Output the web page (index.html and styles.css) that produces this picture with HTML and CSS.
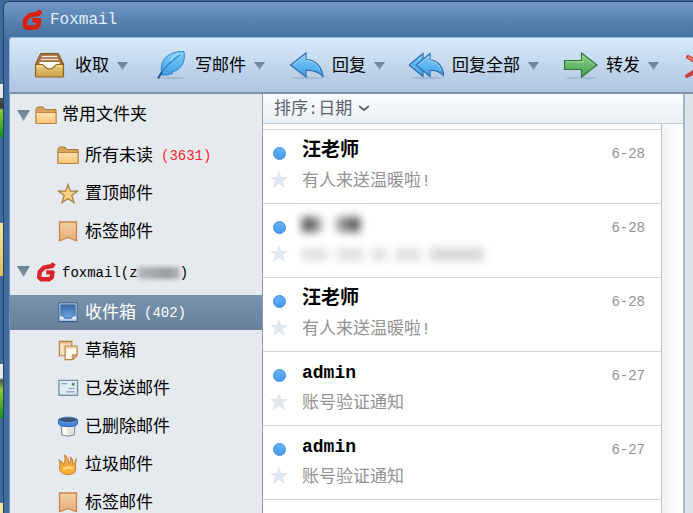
FILE: index.html
```html
<!DOCTYPE html>
<html lang="zh-CN">
<head>
<meta charset="utf-8">
<meta name="viewport" content="width=device-width, initial-scale=1">
<title>Foxmail</title>
<link rel="stylesheet" href="styles.css">
</head>
<body>
<svg class="defs" aria-hidden="true">
  <defs>
    <linearGradient id="gold" x1="0" y1="0" x2="0" y2="1"><stop offset="0" stop-color="#ffe3b3"/><stop offset="1" stop-color="#f9c377"/></linearGradient>
    <linearGradient id="tray" x1="0" y1="0" x2="0" y2="1"><stop offset="0" stop-color="#ecd083"/><stop offset="1" stop-color="#c99f48"/></linearGradient>
    <linearGradient id="sky" x1="0" y1="0" x2="0" y2="1"><stop offset="0" stop-color="#84d0fa"/><stop offset="1" stop-color="#3c9fe6"/></linearGradient>
    <linearGradient id="leaf" x1="0" y1="0" x2="0" y2="1"><stop offset="0" stop-color="#8ed18b"/><stop offset="1" stop-color="#44a04c"/></linearGradient>
    <linearGradient id="tag" x1="0" y1="0" x2="0" y2="1"><stop offset="0" stop-color="#f0d0a0"/><stop offset="1" stop-color="#eaae7c"/></linearGradient>
    <linearGradient id="fire" x1="0" y1="0" x2="0" y2="1"><stop offset="0" stop-color="#e9a052"/><stop offset="1" stop-color="#ffb52c"/></linearGradient>
    <linearGradient id="navy" x1="0" y1="0" x2="0" y2="1"><stop offset="0" stop-color="#3767a8"/><stop offset="1" stop-color="#72a8e0"/></linearGradient>
    <linearGradient id="caret" x1="0" y1="0" x2="0" y2="1"><stop offset="0" stop-color="#6c8296"/><stop offset="1" stop-color="#8799aa"/></linearGradient>
  </defs>
  <symbol id="fox" viewBox="0 0 60 64"><path d="M55 4 50 13 38 15 23 18 10 31 8 49 14 55H41L49 48 51 33H31" fill="none" stroke="currentColor" stroke-width="14" stroke-linejoin="round"/></symbol>
  <symbol id="folder" viewBox="0 0 22 19"><path d="M1 17.500V3L2.500 1H8l2 2.500h11V17.500Z" fill="#d9a45c" stroke="#b37a35"/><path d="M1 6.500h20v11H1Z" fill="url(#gold)" stroke="#bb8440"/></symbol>
  <symbol id="bookmark" viewBox="0 0 22 21"><path d="M2.500 1h17v18.500L17 19l-6-2.500L5 19l-2.500.5Z" fill="url(#tag)" stroke="#c8854f" stroke-width="1.300"/></symbol>
  <symbol id="small-star" viewBox="0 0 18 17"><path d="M9 0l2.500 6H18l-5 4 2 7-6-4-6 4 2-7-5-4h6.500Z" fill="#dfe7ef"/></symbol>
  <symbol id="down" viewBox="0 0 12 8" preserveAspectRatio="none"><path d="M0 0h12L6 8Z" fill="url(#caret)"/></symbol>
</svg>

<div class="window">
  <header class="titlebar">
    <svg class="brand brand-title" aria-hidden="true"><use href="#fox"/></svg>
    <h1>Foxmail</h1>
  </header>

  <div class="toolbar" role="toolbar">
    <button type="button">
      <svg class="tool-icon" viewBox="0 0 35 34" aria-hidden="true"><path d="M8.500 4.500h18l5 10.500v2h-28v-2Z" fill="#a77438" stroke="#88571f"/><path d="M9.500 6.500h16v2h-16Z" fill="#f8ece0" stroke="#9a6c48" stroke-width=".6"/><path d="M8.500 9.500h18v2h-18Z" fill="#f5ded1" stroke="#9a6c48" stroke-width=".6"/><path d="M7.500 13h20v8h-20Z" fill="#fffdf8"/><path d="M3.500 15.500H10c3 0 2 4.500 7.500 4.500s4.500-4.500 7.500-4.500h6.500v11.500q0 1-1 1h-26q-1 0-1-1Z" fill="url(#tray)" stroke="#91641f" stroke-width="1.200"/><path d="M5 17h5M26 17h4" stroke="#fbe7a8"/></svg>
      <span>收取</span><svg class="caret" aria-hidden="true"><use href="#down"/></svg>
    </button>
    <button type="button">
      <svg class="tool-icon" viewBox="0 0 35 34" aria-hidden="true"><ellipse cx="20" cy="29" rx="13" ry="1.300" fill="#91a9c4" opacity=".5"/><path d="M10 26C6 10 18 2 32 2.500 34 14 28 22 19 23l2 1q-5 3-11 2Z" fill="url(#sky)" stroke="#2889cf"/><path d="M6 29.500Q10 21 18 14T28 6" fill="none" stroke="#2f7fc0" stroke-width="1.200"/><path d="M6 29.500 10 23" stroke="#23588c" stroke-width="2"/><path d="M19 12q1-5 8-7" fill="none" stroke="#b9e7ff" stroke-width="1.500" opacity=".7"/></svg>
      <span>写邮件</span><svg class="caret" aria-hidden="true"><use href="#down"/></svg>
    </button>
    <button type="button">
      <svg class="tool-icon" viewBox="0 0 35 34" aria-hidden="true"><ellipse cx="18" cy="29" rx="16" ry="1.300" fill="#91a9c4" opacity=".5"/><path d="M1.500 16 17 4v6.500c10 0 16 8 17 17-5-5-10-6.500-17-6v6.500Z" fill="url(#sky)" stroke="#376fac" stroke-width="1.200"/><path d="M4 16 16 6.500v5c8 0 12 4 15 10" fill="none" stroke="#a9e0fd" stroke-width=".7"/></svg>
      <span>回复</span><svg class="caret" aria-hidden="true"><use href="#down"/></svg>
    </button>
    <button type="button">
      <svg class="tool-icon" viewBox="0 0 35 34" aria-hidden="true"><ellipse cx="18" cy="29" rx="15" ry="1.300" fill="#91a9c4" opacity=".5"/><path d="M0 16 14 4.500v23Z" fill="url(#sky)" stroke="#2f6eac" stroke-width="1.200"/><path d="M7 16 21 4.500v6.500c8 0 13 7 14 16-4-4-9-6-14-5.500v6Z" fill="url(#sky)" stroke="#2f6eac" stroke-width="1.200"/><path d="M9.500 16 20 7v5c7 0 10 4 12 9" fill="none" stroke="#a9e0fd" stroke-width=".7"/></svg>
      <span>回复全部</span><svg class="caret" aria-hidden="true"><use href="#down"/></svg>
    </button>
    <button type="button">
      <svg class="tool-icon" viewBox="0 0 35 34" aria-hidden="true"><ellipse cx="18" cy="29" rx="16" ry="1.300" fill="#91a9c4" opacity=".5"/><path d="M1.500 11.500h17v-7.500L34 16 18.500 28v-7.500h-17Z" fill="url(#leaf)" stroke="#327a3c" stroke-width="1.200"/><path d="M3 13h17V7l11 9" fill="none" stroke="#a5dca0" stroke-width=".8"/></svg>
      <span>转发</span><svg class="caret" aria-hidden="true"><use href="#down"/></svg>
    </button>
    <button type="button" aria-label="删除">
      <svg class="tool-icon" viewBox="0 0 35 34" aria-hidden="true"><path d="M5 8q10 5 20 19M4 27Q13 23 26 7" fill="none" stroke="#c83e38" stroke-width="4" stroke-linecap="round"/><path d="M5 8q10 5 20 19" fill="none" stroke="#f07a70" stroke-width="2"/></svg>
    </button>
  </div>

  <div class="workspace">
    <nav class="folders">
      <div class="group">
        <svg class="caret" aria-hidden="true"><use href="#down"/></svg>
        <svg class="folder-icon" aria-hidden="true"><use href="#folder"/></svg>
        <span>常用文件夹</span>
      </div>
      <ul>
        <li><a href="#unread"><svg class="folder-icon" aria-hidden="true"><use href="#folder"/></svg><span>所有未读</span><span class="count unread">(3631)</span></a></li>
        <li><a href="#pinned"><svg class="folder-icon" viewBox="0 0 22 22" aria-hidden="true"><path d="M11 1.500 13.500 8.500H21l-6 4.500 2.500 7.500L11 16.500 4.500 20.500 7 13 1 8.500h7.500Z" fill="#f6d181" stroke="#a7803f" stroke-width="1.300"/></svg><span>置顶邮件</span></a></li>
        <li><a href="#tagged"><svg class="folder-icon" aria-hidden="true"><use href="#bookmark"/></svg><span>标签邮件</span></a></li>
      </ul>
      <div class="group account">
        <svg class="caret" aria-hidden="true"><use href="#down"/></svg>
        <svg class="folder-icon brand" aria-hidden="true"><use href="#fox"/></svg>
        <span class="address">foxmail(z<i class="smudge"></i>)</span>
      </div>
      <ul>
        <li><a class="selected" href="#inbox" aria-current="page"><svg class="folder-icon" viewBox="0 0 22 22" aria-hidden="true"><path d="M1.500 1h19v19.500h-19Z" fill="#dce9f6" stroke="#254f84"/><path d="M3.500 3h15v11.500H16L14.500 17h-7L6 14.500H3.500Z" fill="url(#navy)" stroke="#33639d"/><path d="M3 19h16" stroke="#7fa5cf"/></svg><span>收件箱</span><span class="count">(402)</span></a></li>
        <li><a href="#drafts"><svg class="folder-icon" viewBox="0 0 22 22" aria-hidden="true"><path d="M2 1.500h13v15H2Z" fill="#f4dfbf" stroke="#b98445" stroke-width="1.300"/><path d="M2 3h13" stroke="#d6a467"/><path d="M8 6.500h12.500V16L16 20.500H8Z" fill="#fffaf0" stroke="#b98445" stroke-width="1.300"/><path d="M9 8h11" stroke="#efd4aa" stroke-width="2"/><path d="M20 15.500h-4.500v5Z" fill="#eab776" stroke="#b98445"/></svg><span>草稿箱</span></a></li>
        <li><a href="#sent"><svg class="folder-icon" viewBox="0 0 22 22" aria-hidden="true"><path d="M1.500 2.500h19.500v15.500h-19.500Z" fill="#e3ebf4" stroke="#7b91ad" stroke-width="1.500"/><path d="M4 6h6M12 11h6M9 14.500h9" stroke="#7f9fc7" stroke-width="1.300"/><path d="M15 5h3v3h-3Z" fill="#4b9671"/></svg><span>已发送邮件</span></a></li>
        <li><a href="#deleted"><svg class="folder-icon" viewBox="0 0 22 22" aria-hidden="true"><path d="M3.500 7h15l-1 13q-6.500 2-13 0Z" fill="#e6e5e1" stroke="#7487a0"/><path d="M6 10h4v10H6Z" fill="#fff"/><path d="M1 4v4q1 3 10 3t10-3V4Z" fill="#4387de" stroke="#2b5dae"/><ellipse cx="11" cy="4" rx="10" ry="3" fill="#3c5371" stroke="#689fe5"/></svg><span>已删除邮件</span></a></li>
        <li><a href="#junk"><svg class="folder-icon" viewBox="0 0 22 22" aria-hidden="true"><path d="M4 19C0 15 4 11 1.500 6q4 2 5 5Q9 7 7.500 1q4.500 3 4.500 9 3-2 1.500-7 4 3 2.500 8 2-1 4-6-2 5-1 9 1 8-9 7.500-4 0-6-2.500Z" fill="url(#fire)" stroke="#c2782d"/><path d="M6 16q5-3 10-1" fill="none" stroke="#ffdc82" stroke-width="2"/></svg><span>垃圾邮件</span></a></li>
        <li><a href="#account-tagged"><svg class="folder-icon" aria-hidden="true"><use href="#bookmark"/></svg><span>标签邮件</span></a></li>
      </ul>
    </nav>

    <main class="messages">
      <button class="sort" type="button"><span>排序:日期</span><svg class="chevron" viewBox="0 0 10 7" aria-hidden="true"><path d="M0 1l5 4 5-4" fill="none" stroke="#5b6570" stroke-width="2"/></svg></button>
      <div class="scroller">
        <ul class="mail-list">
          <li>
            <div class="marks"><i class="dot"></i><svg class="flag" aria-hidden="true"><use href="#small-star"/></svg></div>
            <div class="summary"><h2>汪老师</h2><p>有人来送温暖啦!</p></div>
            <time>6-28</time>
          </li>
          <li>
            <div class="marks"><i class="dot"></i><svg class="flag" aria-hidden="true"><use href="#small-star"/></svg></div>
            <div class="summary"><div class="blur-name"><i></i><i></i></div><div class="blur-subject"><i></i><i></i><i></i><i></i><i></i></div></div>
            <time>6-28</time>
          </li>
          <li>
            <div class="marks"><i class="dot"></i><svg class="flag" aria-hidden="true"><use href="#small-star"/></svg></div>
            <div class="summary"><h2>汪老师</h2><p>有人来送温暖啦!</p></div>
            <time>6-28</time>
          </li>
          <li>
            <div class="marks"><i class="dot"></i><svg class="flag" aria-hidden="true"><use href="#small-star"/></svg></div>
            <div class="summary"><h2 class="latin">admin</h2><p>账号验证通知</p></div>
            <time>6-27</time>
          </li>
          <li>
            <div class="marks"><i class="dot"></i><svg class="flag" aria-hidden="true"><use href="#small-star"/></svg></div>
            <div class="summary"><h2 class="latin">admin</h2><p>账号验证通知</p></div>
            <time>6-27</time>
          </li>
        </ul>
        <div class="track"></div>
      </div>
    </main>
    <div class="preview"></div>
  </div>
</div>
</body>
</html>
```

FILE: styles.css
```css
* { box-sizing: border-box; }

body {
  margin: 0;
  padding: 1px 0 0 3px;
  height: 100vh;
  overflow: hidden;
  font: 17px/24px "Liberation Mono", "Noto Sans CJK SC", monospace;
  color: #000;
  /* desktop visible along the left edge of the window */
  background: linear-gradient(#3d6b9f 84px, #e9edf0 84px, #dfe5ea 98px, #4c5550 98px, #384039 108px, #8dcc35 110px, #179322 136px, #3d6b9f 138px, #3d6b9f 223px, #f4e3a0 223px, #dfc159 276px, #3d6b9f 276px, #3d6b9f 364px, #e9edf0 364px, #dfe5ea 378px, #4c5550 380px, #8dcc35 390px, #179322 417px, #3d6b9f 419px, #3d6b9f 503px, #f4e3a0 503px);
}

ul, h1, h2, p { margin: 0; padding: 0; list-style: none; }
button { border: 0; padding: 0; background: none; color: inherit; font: inherit; }
svg { display: block; flex: none; }
.defs { position: absolute; width: 0; height: 0; }

.window {
  height: 100%;
  display: flex;
  flex-direction: column;
  padding-left: 5px;
  background: #416c9f;
  border: 1px solid #263f5c;
  border-width: 1px 0 0 1px;
  border-top-left-radius: 6px;
}

.titlebar {
  display: flex;
  align-items: center;
  gap: 8px;
  height: 35px;
  flex: none;
  margin-left: -5px;
  padding-left: 18px;
  background: linear-gradient(#6f98c5, #44719f);
  border-top-left-radius: 5px;
}
.titlebar h1 { font-size: 16px; font-weight: 400; color: #e4eef8; }
.brand { color: #d8262a; }
.brand-title { width: 20px; height: 22px; color: #d7200e; }

.toolbar {
  display: flex;
  gap: 24px;
  height: 57px;
  flex: none;
  padding: 2px 0 0 22px;
  overflow: hidden;
  background: linear-gradient(#d8eafa, #aec4e0);
  border-top: 1px solid #93b6d9;
  border-bottom: 2px solid #7f92a7;
  border-left: 1px solid #93b6d9;
  border-top-left-radius: 3px;
}
.toolbar button { display: flex; align-items: center; gap: 8px; flex: none; }
.toolbar span, .folders span, .sort span { padding-top: 2px; }
.tool-icon { width: 35px; height: 34px; }
.toolbar .caret { width: 11px; height: 8px; }

.workspace { display: flex; flex: 1; min-height: 0; }

.folders {
  width: 254px;
  flex: none;
  overflow: hidden;
  background: #e5eaee;
  border-right: 1px solid #8e9ba9;
  border-left: 1px solid #6e94bf;
}
.group { display: flex; align-items: center; height: 42px; padding-left: 7px; gap: 5px; }
.group.account { height: 43px; }
.group .caret { width: 13px; height: 11px; }
.folder-icon { width: 22px; height: 21px; }
.account .brand { height: 20px; }
.address { display: flex; align-items: center; font-size: 14px; }
.smudge { width: 42px; height: 12px; background: linear-gradient(90deg, #b4b7ba, #999c9e 70%, #b4b7ba); filter: blur(2px); }
.folders li { height: 38px; padding-top: 2px; }
.folders a {
  display: flex;
  align-items: center;
  height: 35px;
  padding-left: 47px;
  gap: 6px;
  color: inherit;
  text-decoration: none;
}
.folders a.selected { color: #fff; background: linear-gradient(#7893ad, #687f98); }
.folders .count { margin-left: 2px; padding-top: 0; font-size: 14px; }
.folders .unread { color: #ff2626; }

.messages { display: flex; flex-direction: column; flex: 1; min-width: 0; background: #fff; }
.sort {
  display: flex;
  align-items: center;
  gap: 7px;
  height: 30px;
  flex: none;
  padding-left: 11px;
  color: #5b646d;
  background: linear-gradient(#fafcfd, #eaf0f4);
  border-bottom: 1px solid #c4cad0;
}
.chevron { width: 10px; height: 7px; }
.scroller { display: flex; flex: 1; min-height: 0; }
.mail-list { flex: 1; min-width: 0; padding-top: 5px; overflow: hidden; }
.mail-list li {
  display: flex;
  height: 74px;
  padding: 9px 16px 0 7px;
  border-top: 1px solid #d2d5d8;
}
.mail-list li:last-child { height: 75px; border-bottom: 1px solid #d2d5d8; }
.marks { display: flex; flex-direction: column; align-items: center; gap: 11px; width: 18px; padding-top: 8px; }
.dot { width: 13px; height: 13px; border-radius: 50%; background: linear-gradient(#69b1fa, #429af0); border: 1px solid #3d8cdc; }
.flag { width: 18px; height: 17px; }
.summary { flex: 1; min-width: 0; padding-left: 14px; }
.summary h2 { font-size: 19px; line-height: 24px; }
.summary h2.latin { font-size: 18px; }
.summary p { padding-top: 7px; color: #929292; }
time { padding-top: 3px; font-size: 14px; color: #929292; }

.blur-name, .blur-subject { display: flex; height: 22px; align-items: center; filter: blur(4px); }
.blur-name { gap: 15px; }
.blur-name i { width: 19px; height: 15px; background: linear-gradient(90deg, #444, #999); }
.blur-name i + i { width: 24px; background: linear-gradient(90deg, #aaa, #444); }
.blur-subject { gap: 9px; margin-top: 8px; }
.blur-subject i { width: 26px; height: 13px; background: #e0e0e0; }
.blur-subject i:nth-child(3) { width: 14px; }
.blur-subject i:last-child { width: 54px; background: #d6d6d6; }

.track { width: 22px; flex: none; border-left: 1px solid #bcc3ca; background: linear-gradient(90deg, #f1f4f5, #fff); }
.preview { width: 10px; flex: none; border-left: 2px solid #a9b5c1; background: #dce3ea; }
```
